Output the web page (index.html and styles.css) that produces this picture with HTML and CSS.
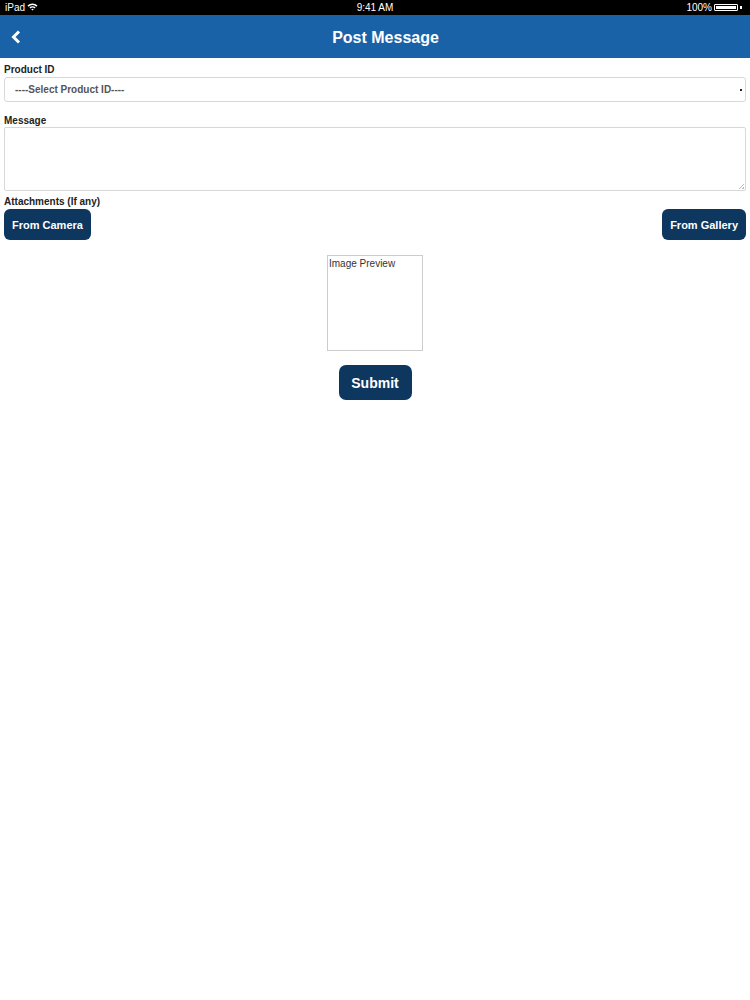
FILE: index.html
```html
<!DOCTYPE html>
<html>
<head>
<meta charset="utf-8">
<link rel="stylesheet" href="styles.css">
</head>
<body>
<div class="status">
  <div class="status-left">iPad
    <svg class="wifi" width="11" height="8" viewBox="0 0 11 8"><path d="M0.5 2.6 A7 7 0 0 1 10.5 2.6 L9.4 3.7 A5.4 5.4 0 0 0 1.6 3.7 Z" fill="#fff"/><path d="M2.4 4.5 A4.4 4.4 0 0 1 8.6 4.5 L7.5 5.6 A2.8 2.8 0 0 0 3.5 5.6 Z" fill="#fff"/><path d="M4.3 6.4 A1.7 1.7 0 0 1 6.7 6.4 L5.5 7.6 Z" fill="#fff"/></svg>
  </div>
  <div class="status-center">9:41 AM</div>
  <div class="status-right">100%
    <span class="battery"><span class="battery-fill"></span></span><span class="battery-tip"></span>
  </div>
</div>
<header class="bar">
  <svg class="back" width="10" height="14" viewBox="0 0 10 14"><path d="M8 1.5 L2.5 7 L8 12.5" fill="none" stroke="#fff" stroke-width="3"/></svg>
  <h1 class="title">Post Message</h1>
</header>
<main class="form">
  <label class="label label-pid">Product ID</label>
  <div class="select">----Select Product ID----<span class="dot"></span></div>
  <label class="label label-msg">Message</label>
  <div class="textarea"><span class="grip"></span></div>
  <label class="label label-att">Attachments (If any)</label>
  <div class="btn-row">
    <button class="btn">From Camera</button>
    <button class="btn">From Gallery</button>
  </div>
  <div class="preview-wrap">
    <div class="preview">Image Preview</div>
  </div>
  <div class="submit-wrap">
    <button class="btn submit">Submit</button>
  </div>
</main>
</body>
</html>
```
FILE: styles.css
```css
* { box-sizing: border-box; }
html, body { margin: 0; padding: 0; background: #fff; }
body { font-family: "Liberation Sans", Arial, sans-serif; width: 750px; }

.status {
  height: 15px;
  background: #000;
  color: #fff;
  font-size: 10px;
  display: flex;
  align-items: center;
  justify-content: space-between;
  padding: 0 8px 0 5px;
  position: relative;
}
.status-left { display: flex; align-items: center; gap: 2px; }
.wifi { margin-top: -1px; }
.status-center { position: absolute; left: 0; right: 0; text-align: center; top: 2px; }
.status-right { display: flex; align-items: center; gap: 2px; }
.battery {
  width: 24px; height: 7px; border: 1px solid #fff; border-radius: 1px; padding: 1px; display: inline-flex;
}
.battery-fill { flex: 1; background: #fff; }
.battery-tip { width: 2px; height: 3px; background: #fff; }

.bar {
  height: 43px;
  background: #1a62a8;
  display: flex;
  align-items: center;
  padding-top: 1px;
}
.back { margin-left: 11px; }
.title {
  margin: 0;
  flex: 1;
  text-align: center;
  color: #fff;
  font-size: 16px;
  font-weight: bold;
  padding-top: 1px;
}

.form { padding: 0 4px; display: flex; flex-direction: column; }
.label {
  font-size: 10px;
  font-weight: bold;
  color: #222;
  margin-top: 5px;
  line-height: 12px;
  height: 12px;
}
.label-pid { margin-top: 6px; }
.select {
  margin-top: 1px;
  height: 25px;
  border: 1px solid #d8d8d8;
  border-radius: 3px;
  font-size: 10px;
  font-weight: bold;
  color: #555;
  padding-left: 10px;
  display: flex;
  align-items: center;
  position: relative;
}
.dot { position: absolute; right: 3px; top: 11px; width: 2px; height: 2px; background: #222; }
.label-msg { margin-top: 13px; }
.textarea {
  margin-top: 0;
  height: 64px;
  border: 1px solid #d8d8d8;
  border-radius: 2px;
  position: relative;
}
.grip {
  position: absolute; right: 1px; bottom: 1px; width: 5px; height: 5px;
  background: linear-gradient(135deg, transparent 45%, #bbb 45%, #bbb 55%, transparent 55%, transparent 75%, #bbb 75%);
}
.label-att { margin-top: 5px; }
.btn-row { display: flex; justify-content: space-between; margin-top: 1px; }
.btn {
  font-family: "Liberation Sans", Arial, sans-serif;
  background: #0d375f;
  color: #fff;
  border: none;
  border-radius: 6px;
  font-size: 11px;
  font-weight: bold;
  height: 31px;
  padding: 0 8px;
}
.preview-wrap { display: flex; justify-content: center; margin-top: 15px; }
.preview {
  width: 96px; height: 96px;
  border: 1px solid #ccc;
  font-size: 10px;
  color: #333;
  padding: 2px 1px;
}
.submit-wrap { display: flex; justify-content: center; margin-top: 14px; }
.submit {
  height: 35px;
  width: 73px;
  font-size: 14px;
  padding: 0;
  border-radius: 7px;
}
```
